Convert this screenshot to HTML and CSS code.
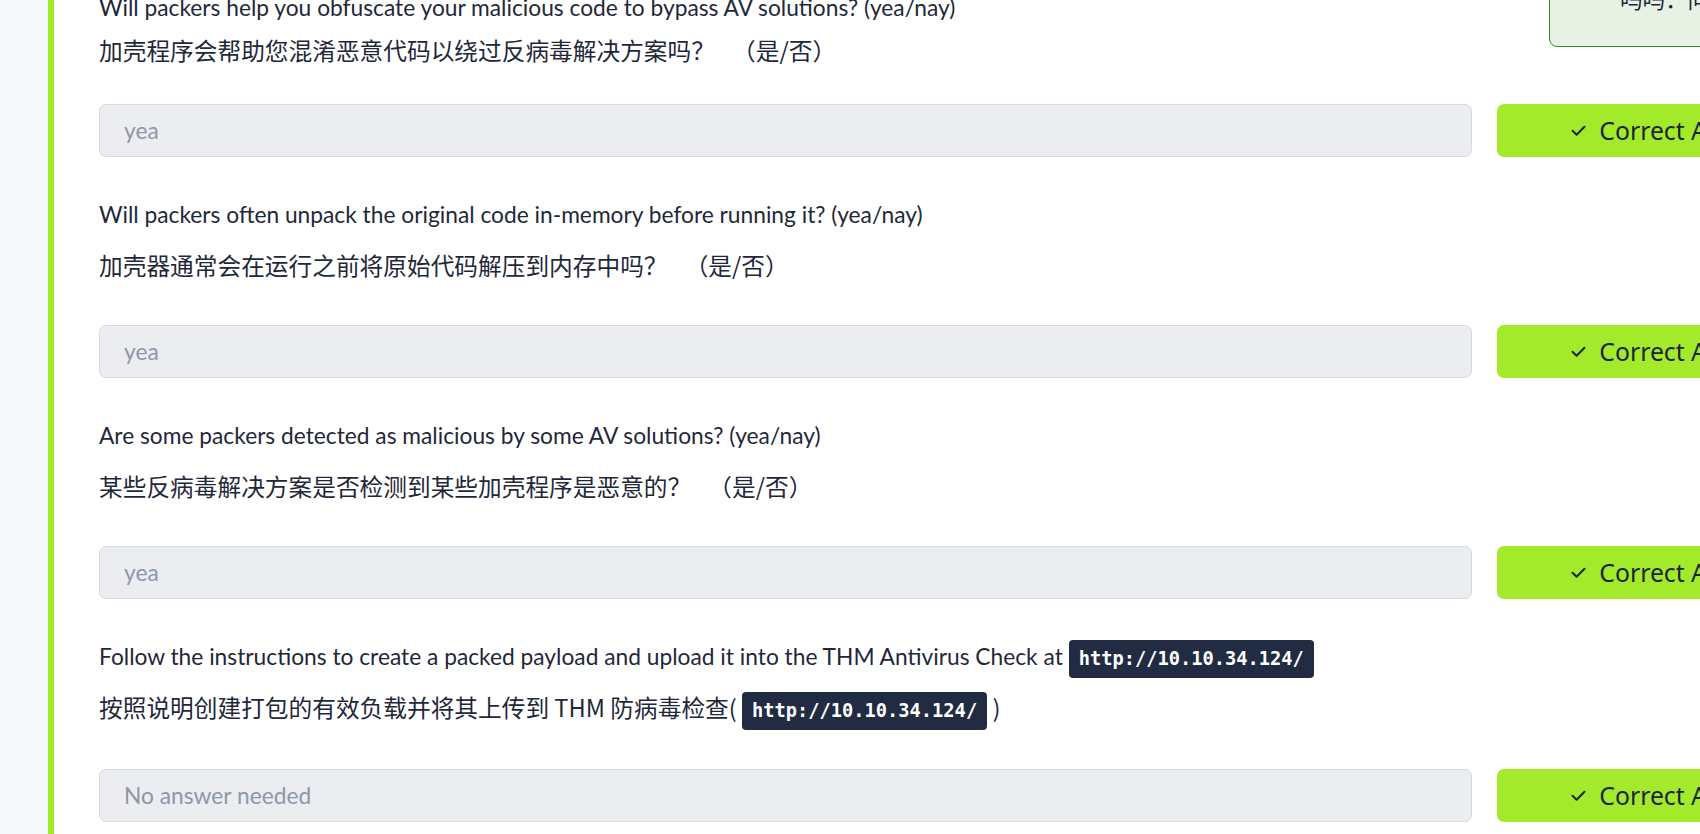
FILE: index.html
```html
<!DOCTYPE html>
<html lang="en">
<head>
<meta charset="utf-8">
<title>Packers - Questions</title>
<link rel="stylesheet" href="styles.css">
</head>
<body>
<div class="page">
  <aside class="sidebar"></aside>
  <main class="content">
    <div class="questions">
      <section class="question question-first">
        <p class="q-en">Will packers help you obfuscate your malicious code to bypass AV solutions? (yea/nay)</p>
        <p class="q-zh">加壳程序会帮助您混淆恶意代码以绕过反病毒解决方案吗？&ensp; （是/否）</p>
        <div class="answer-row">
          <input class="answer" type="text" value="yea" disabled>
          <button class="btn-correct" type="button"><svg class="check" viewBox="0 0 17 17" width="17" height="17"><path d="M2.5 8.8 L6.6 12.8 L14.5 4.8" fill="none" stroke="currentColor" stroke-width="2" stroke-linecap="round" stroke-linejoin="round"/></svg><span>Correct Answer</span></button>
        </div>
      </section>
      <section class="question">
        <p class="q-en">Will packers often unpack the original code in-memory before running it? (yea/nay)</p>
        <p class="q-zh">加壳器通常会在运行之前将原始代码解压到内存中吗？&ensp; （是/否）</p>
        <div class="answer-row">
          <input class="answer" type="text" value="yea" disabled>
          <button class="btn-correct" type="button"><svg class="check" viewBox="0 0 17 17" width="17" height="17"><path d="M2.5 8.8 L6.6 12.8 L14.5 4.8" fill="none" stroke="currentColor" stroke-width="2" stroke-linecap="round" stroke-linejoin="round"/></svg><span>Correct Answer</span></button>
        </div>
      </section>
      <section class="question">
        <p class="q-en">Are some packers detected as malicious by some AV solutions? (yea/nay)</p>
        <p class="q-zh">某些反病毒解决方案是否检测到某些加壳程序是恶意的？&ensp; （是/否）</p>
        <div class="answer-row">
          <input class="answer" type="text" value="yea" disabled>
          <button class="btn-correct" type="button"><svg class="check" viewBox="0 0 17 17" width="17" height="17"><path d="M2.5 8.8 L6.6 12.8 L14.5 4.8" fill="none" stroke="currentColor" stroke-width="2" stroke-linecap="round" stroke-linejoin="round"/></svg><span>Correct Answer</span></button>
        </div>
      </section>
      <section class="question">
        <p class="q-en">Follow the instructions to create a packed payload and upload it into the THM Antivirus Check at <code class="code">http://10.10.34.124/</code></p>
        <p class="q-zh">按照说明创建打包的有效负载并将其上传到 THM 防病毒检查( <code class="code">http://10.10.34.124/</code> )</p>
        <div class="answer-row">
          <input class="answer" type="text" value="No answer needed" disabled>
          <button class="btn-correct" type="button"><svg class="check" viewBox="0 0 17 17" width="17" height="17"><path d="M2.5 8.8 L6.6 12.8 L14.5 4.8" fill="none" stroke="currentColor" stroke-width="2" stroke-linecap="round" stroke-linejoin="round"/></svg><span>Correct Answer</span></button>
        </div>
      </section>
    </div>
  </main>
</div>
<div class="hint-box"><span class="hint-text">吗吗：问</span></div>
</body>
</html>
```
FILE: styles.css
```css
* { box-sizing: border-box; }

html, body {
  margin: 0;
  padding: 0;
  width: 1700px;
  height: 834px;
  overflow: hidden;
  background: #ffffff;
}

body {
  position: relative;
  font-family: "Lato", "Noto Sans CJK SC", sans-serif;
  color: #1f2839;
}

.page {
  display: flex;
  min-height: 834px;
}

.sidebar {
  flex: 0 0 48px;
  background: #f7f8fa;
}

.content {
  flex: 1 1 auto;
  border-left: 6px solid #a3ea2a;
  background: #ffffff;
  padding-left: 45px;
}

.questions {
  margin-top: -9px;
}

.question {
  padding-bottom: 41px;
}

.q-en {
  margin: 0 0 16px;
  font-size: 22.75px;
  line-height: 34px;
  white-space: nowrap;
}

.q-zh {
  margin: 0 0 43px;
  font-family: "Noto Sans CJK SC", sans-serif;
  font-size: 23.7px;
  line-height: 34px;
  white-space: nowrap;
}

.question-first .q-en { margin-bottom: 8px; }
.question-first .q-zh { margin-bottom: 37px; }

.code {
  display: inline-block;
  vertical-align: middle;
  margin: -4px 0;
  font-family: "DejaVu Sans Mono", monospace;
  font-weight: bold;
  font-size: 18.7px;
  line-height: 22px;
  color: #ffffff;
  background: #212c42;
  border-radius: 4px;
  padding: 8px 10px;
}

.answer-row {
  display: flex;
  gap: 25px;
  align-items: stretch;
}

.answer {
  flex: 0 0 1373px;
  height: 53px;
  margin: 0;
  padding: 0 24px;
  border: 1px solid #d5d9e0;
  border-radius: 7px;
  background: #ecedf1;
  font-family: "Lato", sans-serif;
  font-size: 22.75px;
  color: #8d97a8;
  -webkit-text-fill-color: #8d97a8;
  opacity: 1;
}

.btn-correct {
  flex: 0 0 354px;
  height: 53px;
  margin: 0;
  border: 0;
  border-radius: 7px;
  background: #a3ea2a;
  color: #1c2435;
  font-family: "Noto Sans", sans-serif;
  font-size: 24.75px;
  display: flex;
  align-items: center;
  justify-content: center;
  gap: 12px;
  padding: 0;
}

.check {
  flex: 0 0 17px;
}

.hint-box {
  position: absolute;
  left: 1549px;
  top: -20px;
  width: 200px;
  height: 67px;
  background: #e7f2e5;
  border: 1.5px solid #3d8a30;
  border-radius: 8px;
  padding-left: 70px;
}

.hint-text {
  display: block;
  font-family: "Noto Sans CJK SC", sans-serif;
  font-size: 22.5px;
  line-height: 34px;
  color: #1f2839;
  white-space: nowrap;
}
```
